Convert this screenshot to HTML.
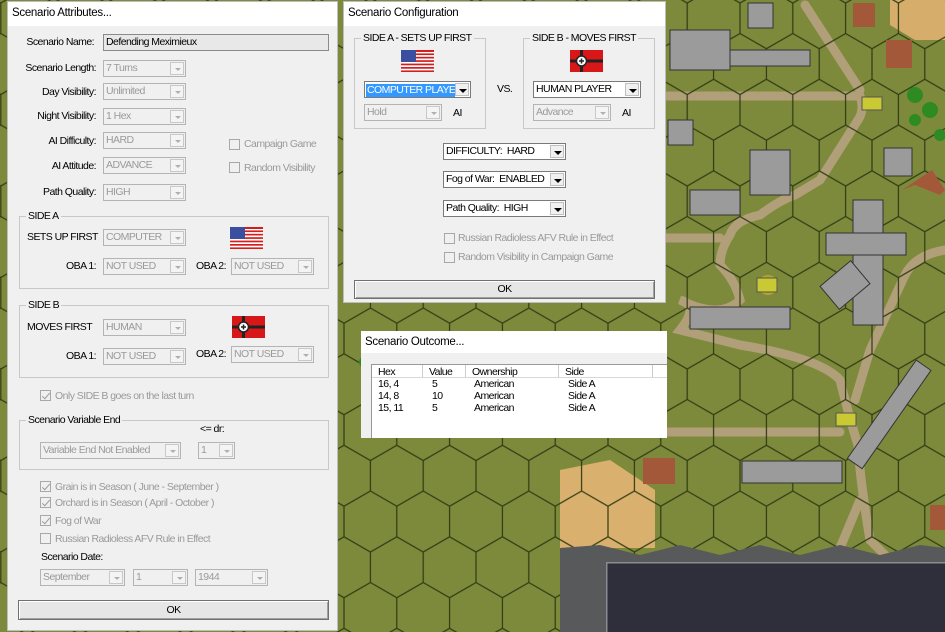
<!DOCTYPE html>
<html><head><meta charset="utf-8"><style>
*{margin:0;padding:0;box-sizing:border-box}
body{width:945px;height:632px;overflow:hidden;position:relative;background:#7d8a3c;font-family:"Liberation Sans",Arial,sans-serif;font-size:10.5px;letter-spacing:-0.55px;color:#000}
.a{position:absolute;white-space:nowrap}
.dlg{position:absolute;background:#f0f0f0;border:1px solid #bdbdbd}
.tb{position:absolute;left:0;right:0;top:0;height:24px;background:#fff;font-size:11.5px;letter-spacing:-0.3px;padding:5px 0 0 4px;white-space:nowrap}
.r{text-align:right}
.cb{position:absolute;height:17px;border:1px solid #b4b4b4;background:#f0f0f0;color:#9a9a9a;line-height:15px;padding-left:2px;white-space:nowrap;overflow:hidden}
.cb .ar{position:absolute;right:1px;top:1px;width:14px;height:13px;border:1px solid #c8c8c8;background:#f4f4f4}
.cb .ar:after{content:"";position:absolute;left:4px;top:5px;border-left:3px solid transparent;border-right:3px solid transparent;border-top:3px solid #b0b0b0}
.cb.en{background:#fff;color:#000;border:1px solid #7a7a7a}
.cb.en .ar{border:1px solid #c0c0c0;background:#f0f0f0}
.cb.en .ar:after{border-top-color:#000;left:3px;border-left-width:4px;border-right-width:4px;border-top-width:4px}
.grp{position:absolute;border:1px solid #c8c8c8}
.lg{position:absolute;top:-7px;left:6px;background:#f0f0f0;padding:0 2px;white-space:nowrap}
.ck{position:absolute;width:11px;height:11px;border:1px solid #a8a8a8;background:#f0f0f0}
.ck.on:after{content:"";position:absolute;left:3px;top:0px;width:3px;height:7px;border-right:1.5px solid #999;border-bottom:1.5px solid #999;transform:rotate(40deg)}
.gt{color:#9a9a9a}
.btn{position:absolute;border:1px solid #707070;background:#e6e6e6;text-align:center;box-shadow:inset 1px 1px 0 #fff,inset -1px -1px 0 #a0a0a0}
</style></head><body>

<svg class="a" style="left:0;top:0" width="945" height="632">
<defs>
<pattern id="hx" patternUnits="userSpaceOnUse" x="27.2" y="18.25" width="52.8" height="91.5">
<path d="M26.4 0V15.25L0 30.5M26.4 15.25L52.8 30.5M0 30.5V61M52.8 30.5V61M0 61L26.4 76.25L52.8 61M26.4 76.25V91.5" fill="none" stroke="#2e3a12" stroke-width="1.2"/>
</pattern>
</defs>
<rect width="945" height="632" fill="#7d8a3c"/>
<polygon points="890,0 945,0 945,40 915,40 890,25" fill="#d6ad6a"/>
<polygon points="560,470 610,460 655,490 655,548 560,548" fill="#d9b06e"/>
<g fill="none" stroke="#b19f7a" stroke-width="9" stroke-linecap="round">
<path d="M660 96H860Q865 110 858 120L820 180 795 195Q780 200 760 215 735 220 730 235 720 250 720 265 735 280 740 300 720 320 680 300 700 305 680 330 700 335 740 345 820 358 840 380 850 420 858 445 860 480 870 540"/>
<path d="M805 5L860 90"/>
<path d="M945 250Q915 255 905 275L870 350 855 400"/>
<path d="M660 238H720"/>
<path d="M660 432H840"/>
<path d="M870 540L890 560M860 500L835 560"/>
</g>
<rect width="945" height="632" fill="url(#hx)"/>
<g fill="#9b9b9b" stroke="#333" stroke-width="1">
<rect x="670" y="30" width="60" height="40"/><rect x="730" y="50" width="80" height="16"/>
<rect x="884" y="148" width="28" height="28"/>
<rect x="853" y="200" width="30" height="125"/><rect x="826" y="233" width="80" height="22"/>
<rect x="690" y="190" width="50" height="25"/><rect x="750" y="150" width="40" height="45"/>
<rect x="690" y="307" width="100" height="22"/><rect x="742" y="461" width="100" height="22"/>
<rect x="825" y="270" width="40" height="30" transform="rotate(-40 845 285)"/>
<rect x="880" y="355" width="18" height="120" transform="rotate(35 890 415)"/>
<rect x="748" y="3" width="25" height="25"/><rect x="668" y="120" width="25" height="25"/>
</g>
<g fill="#a4583a"><rect x="853" y="3" width="22" height="24"/><rect x="886" y="40" width="26" height="28"/><rect x="643" y="458" width="32" height="26"/><rect x="930" y="505" width="15" height="25"/><polygon points="902,190 932,170 945,190 940,195 915,185"/></g>
<g fill="#2e8a22"><circle cx="915" cy="95" r="8"/><circle cx="930" cy="110" r="8"/><circle cx="915" cy="120" r="6"/><circle cx="940" cy="135" r="6"/><circle cx="365" cy="362" r="6"/></g>
<g fill="#b3a32d"><circle cx="768" cy="285" r="10"/></g>
<g fill="#c9c933" stroke="#555"><rect x="862" y="97" width="20" height="13"/><rect x="757" y="278" width="20" height="14"/><rect x="836" y="413" width="20" height="13"/></g>
<polygon points="560,548 600,545 640,555 680,545 720,555 760,545 800,555 840,545 880,555 920,545 945,548 945,632 560,632" fill="#58595a"/>
<rect x="606" y="562" width="339" height="70" fill="#2f2e3b"/>
<rect x="606" y="562" width="339" height="1.5" fill="#8b8b92"/><rect x="606" y="562" width="1.5" height="70" fill="#8b8b92"/>
</svg>

<!-- Left dialog -->
<div class="dlg" style="left:7px;top:1px;width:331px;height:630px">
<div class="tb">Scenario Attributes...</div>
</div>
<div class="a r" style="left:10px;top:36px;width:84px">Scenario Name:</div>
<div class="cb" style="left:103px;top:34px;width:226px;color:#000;background:#e8e8e8;border-color:#8a8a8a">Defending Meximieux</div>
<div class="a r" style="left:10px;top:62px;width:86px">Scenario Length:</div>
<div class="cb" style="left:103px;top:60px;width:83px">7 Turns<div class="ar"></div></div>
<div class="a r" style="left:10px;top:86px;width:86px">Day Visibility:</div>
<div class="cb" style="left:103px;top:83px;width:83px">Unlimited<div class="ar"></div></div>
<div class="a r" style="left:10px;top:110px;width:86px">Night Visibility:</div>
<div class="cb" style="left:103px;top:108px;width:83px">1 Hex<div class="ar"></div></div>
<div class="a r" style="left:10px;top:135px;width:86px">AI Difficulty:</div>
<div class="cb" style="left:103px;top:132px;width:83px">HARD<div class="ar"></div></div>
<div class="a r" style="left:10px;top:160px;width:86px">AI Attitude:</div>
<div class="cb" style="left:103px;top:157px;width:83px">ADVANCE<div class="ar"></div></div>
<div class="a r" style="left:10px;top:186px;width:86px">Path Quality:</div>
<div class="cb" style="left:103px;top:184px;width:83px">HIGH<div class="ar"></div></div>
<div class="ck" style="left:229px;top:139px"></div><div class="a gt" style="left:244px;top:138px">Campaign Game</div>
<div class="ck" style="left:229px;top:162px"></div><div class="a gt" style="left:244px;top:162px">Random Visibility</div>

<div class="grp" style="left:19px;top:216px;width:310px;height:73px"><div class="lg">SIDE A</div></div>
<div class="a" style="left:27px;top:231px">SETS UP FIRST</div>
<div class="cb" style="left:103px;top:229px;width:83px">COMPUTER<div class="ar"></div></div>
<div class="a r" style="left:40px;top:260px;width:56px">OBA 1:</div>
<div class="cb" style="left:103px;top:258px;width:83px">NOT USED<div class="ar"></div></div>
<div class="a" style="left:196px;top:260px">OBA 2:</div>
<div class="cb" style="left:231px;top:258px;width:83px">NOT USED<div class="ar"></div></div>

<div class="grp" style="left:19px;top:305px;width:310px;height:73px"><div class="lg">SIDE B</div></div>
<div class="a" style="left:27px;top:321px">MOVES FIRST</div>
<div class="cb" style="left:103px;top:319px;width:83px">HUMAN<div class="ar"></div></div>
<div class="a r" style="left:40px;top:350px;width:56px">OBA 1:</div>
<div class="cb" style="left:103px;top:348px;width:83px">NOT USED<div class="ar"></div></div>
<div class="a" style="left:196px;top:348px">OBA 2:</div>
<div class="cb" style="left:231px;top:346px;width:83px">NOT USED<div class="ar"></div></div>

<div class="ck on" style="left:40px;top:390px"></div><div class="a gt" style="left:55px;top:390px">Only SIDE B goes on the last turn</div>
<div class="grp" style="left:19px;top:420px;width:310px;height:50px"><div class="lg">Scenario Variable End</div></div>
<div class="a" style="left:200px;top:423px">&lt;= dr:</div>
<div class="cb" style="left:40px;top:442px;width:141px">Variable End Not Enabled<div class="ar"></div></div>
<div class="cb" style="left:198px;top:442px;width:37px">1<div class="ar"></div></div>
<div class="ck on" style="left:40px;top:481px"></div><div class="a gt" style="left:55px;top:481px">Grain is in Season ( June - September )</div>
<div class="ck on" style="left:40px;top:497px"></div><div class="a gt" style="left:55px;top:497px">Orchard is in Season ( April - October )</div>
<div class="ck on" style="left:40px;top:515px"></div><div class="a gt" style="left:55px;top:515px">Fog of War</div>
<div class="ck" style="left:40px;top:533px"></div><div class="a gt" style="left:55px;top:533px">Russian Radioless AFV Rule in Effect</div>
<div class="a" style="left:41px;top:551px">Scenario Date:</div>
<div class="cb" style="left:40px;top:569px;width:85px">September<div class="ar"></div></div>
<div class="cb" style="left:133px;top:569px;width:55px">1<div class="ar"></div></div>
<div class="cb" style="left:195px;top:569px;width:73px">1944<div class="ar"></div></div>
<div class="btn" style="left:18px;top:600px;width:311px;height:20px;line-height:18px">OK</div>

<!-- Middle dialog -->
<div class="dlg" style="left:343px;top:1px;width:323px;height:302px">
<div class="tb">Scenario Configuration</div>
</div>
<div class="grp" style="left:354px;top:38px;width:132px;height:91px"><div class="lg">SIDE A - SETS UP FIRST</div></div>
<div class="grp" style="left:523px;top:38px;width:132px;height:91px"><div class="lg">SIDE B - MOVES FIRST</div></div>
<svg class="a" style="left:401px;top:50px" width="33" height="22"><rect width="33" height="22" fill="#fff"/><g fill="#d41e1e"><rect y="0" width="33" height="2"/><rect y="3.4" width="33" height="1.7"/><rect y="6.8" width="33" height="1.7"/><rect y="10.2" width="33" height="1.7"/><rect y="13.6" width="33" height="1.7"/><rect y="17" width="33" height="1.7"/><rect y="20.4" width="33" height="1.6"/></g><rect width="15" height="12" fill="#3a4fa0"/></svg>
<svg class="a" style="left:570px;top:50px" width="33" height="22"><rect width="33" height="22" fill="#d81818"/><rect x="10" width="3" height="22" fill="#222"/><rect y="9.5" width="33" height="3" fill="#222"/><circle cx="11.5" cy="11" r="5" fill="#fff" stroke="#222" stroke-width="1.5"/><path d="M9 11h5M11.5 8.5v5" stroke="#222" stroke-width="1.5"/></svg>
<div class="cb en" style="left:364px;top:81px;width:107px;padding:1px"><span style="background:#3399ff;color:#fff;display:inline-block;width:89px;height:13px;line-height:13px;padding-left:1px">COMPUTER PLAYER</span><div class="ar"></div></div>
<div class="a" style="left:497px;top:83px">VS.</div>
<div class="cb en" style="left:533px;top:81px;width:108px">HUMAN PLAYER<div class="ar"></div></div>
<div class="cb" style="left:364px;top:104px;width:78px">Hold<div class="ar"></div></div>
<div class="a" style="left:453px;top:107px">AI</div>
<div class="cb" style="left:533px;top:104px;width:78px">Advance<div class="ar"></div></div>
<div class="a" style="left:622px;top:107px">AI</div>
<div class="cb en" style="left:443px;top:143px;width:123px">DIFFICULTY:&nbsp; HARD<div class="ar"></div></div>
<div class="cb en" style="left:443px;top:171px;width:123px">Fog of War:&nbsp; ENABLED<div class="ar"></div></div>
<div class="cb en" style="left:443px;top:200px;width:123px">Path Quality:&nbsp; HIGH<div class="ar"></div></div>
<div class="ck" style="left:444px;top:233px"></div><div class="a gt" style="left:458px;top:232px">Russian Radioless AFV Rule in Effect</div>
<div class="ck" style="left:444px;top:252px"></div><div class="a gt" style="left:458px;top:251px">Random Visibility in Campaign Game</div>
<div class="btn" style="left:354px;top:280px;width:301px;height:19px;line-height:17px">OK</div>

<!-- Outcome -->
<div class="dlg" style="left:361px;top:331px;width:306px;height:107px;border:none">
<div class="tb" style="height:22px;padding-top:5px">Scenario Outcome...</div>
</div>
<div class="a" style="left:371px;top:364px;width:296px;height:74px;background:#fff;border-left:1px solid #999;border-top:1px solid #999"></div>
<div class="a" style="left:372px;top:365px;width:295px;height:13px;background:#fff;border-bottom:1px solid #d8d8d8"></div>
<div class="a" style="left:422px;top:365px;width:1px;height:12px;background:#ccc"></div>
<div class="a" style="left:465px;top:365px;width:1px;height:12px;background:#ccc"></div>
<div class="a" style="left:558px;top:365px;width:1px;height:12px;background:#ccc"></div>
<div class="a" style="left:652px;top:365px;width:1px;height:12px;background:#ccc"></div>
<div class="a" style="left:378px;top:366px">Hex</div>
<div class="a" style="left:429px;top:366px">Value</div>
<div class="a" style="left:472px;top:366px">Ownership</div>
<div class="a" style="left:565px;top:366px">Side</div>
<div class="a" style="left:378px;top:378px;line-height:12px">16, 4<br>14, 8<br>15, 11</div>
<div class="a" style="left:432px;top:378px;line-height:12px">5<br>10<br>5</div>
<div class="a" style="left:474px;top:378px;line-height:12px">American<br>American<br>American</div>
<div class="a" style="left:568px;top:378px;line-height:12px">Side A<br>Side A<br>Side A</div>

<svg class="a" style="left:230px;top:227px" width="33" height="22"><rect width="33" height="22" fill="#fff"/><g fill="#d41e1e"><rect y="0" width="33" height="2"/><rect y="3.4" width="33" height="1.7"/><rect y="6.8" width="33" height="1.7"/><rect y="10.2" width="33" height="1.7"/><rect y="13.6" width="33" height="1.7"/><rect y="17" width="33" height="1.7"/><rect y="20.4" width="33" height="1.6"/></g><rect width="15" height="12" fill="#3a4fa0"/></svg>
<svg class="a" style="left:232px;top:316px" width="33" height="22"><rect width="33" height="22" fill="#d81818"/><rect x="10" width="3" height="22" fill="#222"/><rect y="9.5" width="33" height="3" fill="#222"/><circle cx="11.5" cy="11" r="5" fill="#fff" stroke="#222" stroke-width="1.5"/><path d="M9 11h5M11.5 8.5v5" stroke="#222" stroke-width="1.5"/></svg>
</body></html>
